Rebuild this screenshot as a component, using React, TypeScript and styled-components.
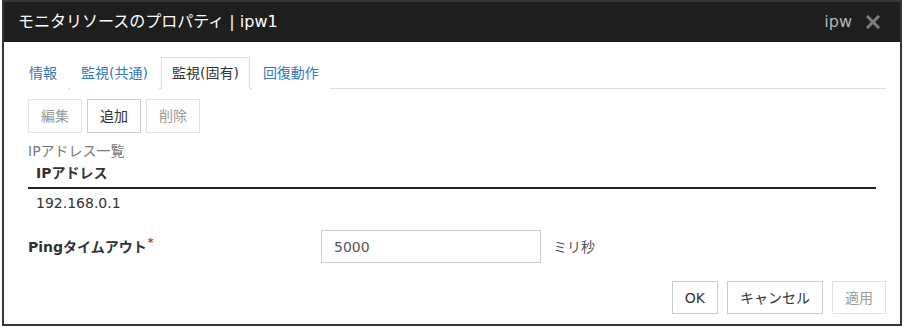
import * as React from 'react'
import styled, { createGlobalStyle } from 'styled-components'

// ___________________________________________________________________

const GlobalStyle = createGlobalStyle`
  html, body {
    margin: 0;
    padding: 0;
    background: #fff;
  }
  body {
    font-family: "DejaVu Sans", "Noto Sans CJK JP", sans-serif;
    font-size: 14px;
    color: #333;
  }
`

const tabs = ['情報', '監視(共通)', '監視(固有)', '回復動作']
const activeTab = 2

// ___________________________________________________________________

const App = () => (
  <>
    <GlobalStyle />
    <Frame>
      <TitleBar>
        <Title>モニタリソースのプロパティ | ipw1</Title>
        <TitleRight>
          <ResourceName>ipw</ResourceName>
          <CloseIcon viewBox="0 0 14 14">
            <line x1="2" y1="2" x2="12" y2="12" />
            <line x1="12" y1="2" x2="2" y2="12" />
          </CloseIcon>
        </TitleRight>
      </TitleBar>

      <Body>
        <TabList>
          {tabs.map((t, i) => (
            <Tab key={t} $active={i === activeTab}>
              {t}
            </Tab>
          ))}
        </TabList>

        <Pane>
          <Toolbar>
            <Button disabled>編集</Button>
            <Button>追加</Button>
            <Button disabled>削除</Button>
          </Toolbar>

          <Caption>IPアドレス一覧</Caption>
          <Table>
            <thead>
              <tr>
                <Th>IPアドレス</Th>
              </tr>
            </thead>
            <tbody>
              <tr>
                <Td>192.168.0.1</Td>
              </tr>
            </tbody>
          </Table>

          <FormRow>
            <Label>
              Pingタイムアウト<Required>*</Required>
            </Label>
            <Input defaultValue="5000" />
            <Unit>ミリ秒</Unit>
          </FormRow>
        </Pane>

        <Footer>
          <Button $size="sm">OK</Button>
          <Button $size="sm">キャンセル</Button>
          <Button $size="sm" disabled>
            適用
          </Button>
        </Footer>
      </Body>
    </Frame>
  </>
)

export default App

// ___________________________________________________________________

const Frame = styled.div`
  box-sizing: border-box;
  width: 900px;
  margin-left: 2px;
  border: 2px solid #363636;
  background: #fff;
`

const TitleBar = styled.div`
  height: 40px;
  background: #1e1e1e;
  display: flex;
  align-items: center;
  justify-content: space-between;
  padding: 0 20px 0 14px;
`

const Title = styled.div`
  color: #fff;
  font-size: 16px;
  line-height: 22px;
  padding-bottom: 1px;
`

const TitleRight = styled.div`
  display: flex;
  align-items: center;
  gap: 14px;
`

const ResourceName = styled.span`
  color: #b4b4b4;
  font-size: 16px;
  line-height: 22px;
`

const CloseIcon = styled.svg`
  width: 14px;
  height: 14px;
  stroke: #7c7c7c;
  stroke-width: 3;
  stroke-linecap: square;
`

const Body = styled.div`
  padding: 15px 14px 10px;
`

const TabList = styled.div`
  display: flex;
  border-bottom: 1px solid #dddddd;
`

const Tab = styled.div<{ $active?: boolean }>`
  padding: 5px 10px;
  line-height: 20px;
  margin-right: 2px;
  margin-bottom: -1px;
  border: 1px solid ${(p) => (p.$active ? '#dddddd' : 'transparent')};
  border-bottom-color: ${(p) => (p.$active ? '#fff' : 'transparent')};
  background: #fff;
  color: ${(p) => (p.$active ? '#333' : '#337ab7')};
  cursor: pointer;
`

const Pane = styled.div`
  padding: 0 10px;
`

const Toolbar = styled.div`
  display: flex;
  gap: 5px;
  margin-top: 10px;
`

const Button = styled.button<{ $size?: 'sm' }>`
  font-family: inherit;
  font-size: 14px;
  line-height: 20px;
  padding: ${(p) => (p.$size === 'sm' ? '6px 12px 5px' : '6px 12px')};
  background: #fff;
  border: 1px solid #cccccc;
  border-radius: 0;
  color: #333;
  cursor: pointer;

  &:disabled {
    border-color: #e3e3e3;
    color: #9a9a9a;
    cursor: default;
  }
`

const Caption = styled.div`
  margin-top: 8px;
  line-height: 20px;
  color: #7a7a7a;
`

const Table = styled.table`
  width: 100%;
  border-collapse: collapse;
`

const Th = styled.th`
  text-align: left;
  font-weight: bold;
  line-height: 20px;
  padding: 2px 8px 4px;
  border-bottom: 2px solid #222;
`

const Td = styled.td`
  line-height: 20px;
  padding: 4px 8px;
`

const FormRow = styled.div`
  display: flex;
  align-items: center;
  margin-top: 13px;
`

const Label = styled.div`
  width: 293px;
  font-weight: bold;
  line-height: 20px;
`

const Required = styled.sup`
  color: #d0312d;
  font-size: 11px;
  font-weight: bold;
  line-height: 0;
  margin-left: 1px;
`

const Input = styled.input`
  box-sizing: border-box;
  width: 220px;
  height: 33px;
  padding: 0 12px;
  border: 1px solid #cccccc;
  font-family: inherit;
  font-size: 14px;
  color: #555;
  outline: none;
`

const Unit = styled.span`
  margin-left: 12px;
  line-height: 20px;
  color: #555;
`

const Footer = styled.div`
  display: flex;
  justify-content: flex-end;
  gap: 9px;
  margin-top: 18px;
`
